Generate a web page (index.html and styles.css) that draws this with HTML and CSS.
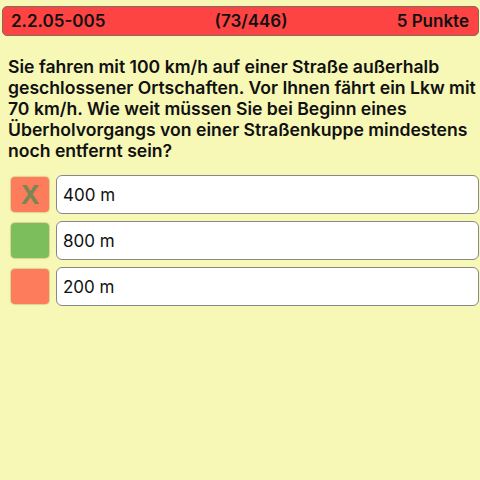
FILE: index.html
```html
<!DOCTYPE html>
<html lang="de">
<head>
<meta charset="utf-8">
<link rel="stylesheet" href="styles.css">
</head>
<body>
<div class="page">
  <div class="header">
    <span class="h-id">2.2.05-005</span>
    <span class="h-count">(73/446)</span>
    <span class="h-points">5 Punkte</span>
  </div>
  <p class="question">Sie fahren mit 100 km/h auf einer Straße außerhalb<br>geschlossener Ortschaften. Vor Ihnen fährt ein Lkw mit<br>70 km/h. Wie weit müssen Sie bei Beginn eines<br>Überholvorgangs von einer Straßenkuppe mindestens<br>noch entfernt sein?</p>
  <div class="answers">
    <div class="answer">
      <div class="check wrong"><span class="x">X</span></div>
      <div class="box">400 m</div>
    </div>
    <div class="answer">
      <div class="check right"></div>
      <div class="box">800 m</div>
    </div>
    <div class="answer">
      <div class="check wrong"></div>
      <div class="box">200 m</div>
    </div>
  </div>
</div>
</body>
</html>
```
FILE: styles.css
```css
html, body {
  margin: 0;
  padding: 0;
  background: #f7f7b6;
}
.page {
  width: 480px;
  height: 480px;
  font-family: Inter, "Liberation Sans", Arial, sans-serif;
  color: #111;
  padding: 6px 1px 0 2px;
  box-sizing: border-box;
}
.header {
  height: 30px;
  box-sizing: border-box;
  background: #fe4343;
  border: 1px solid #7d6e62;
  border-radius: 5px;
  display: flex;
  align-items: center;
  justify-content: space-between;
  padding: 0 9px 0 8px;
  font-size: 17px;
  font-weight: 600;
}
.question {
  margin: 20px 0 0 6px;
  font-size: 17.6px;
  line-height: 21px;
  font-weight: 600;
  white-space: nowrap;
}
.answers {
  margin-top: 14px;
  display: flex;
  flex-direction: column;
  gap: 7px;
}
.answer {
  display: flex;
  align-items: center;
  gap: 7px;
  padding-left: 9px;
}
.check {
  width: 38px;
  height: 35px;
  border-radius: 4px;
  flex: none;
  display: flex;
  align-items: center;
  justify-content: center;
  box-shadow: 0 0 1px 1px rgba(200,190,120,0.6);
}
.check.wrong { background: #fd7c5b; }
.check.right { background: #7cbe5b; }
.x {
  color: #7a8753;
  font-size: 26px;
  font-weight: 700;
  line-height: 1;
}
.box {
  flex: 1;
  height: 39px;
  box-sizing: border-box;
  background: #fff;
  border: 1px solid #888;
  border-radius: 6px;
  display: flex;
  align-items: center;
  padding-left: 6px;
  font-size: 17px;
}
```
